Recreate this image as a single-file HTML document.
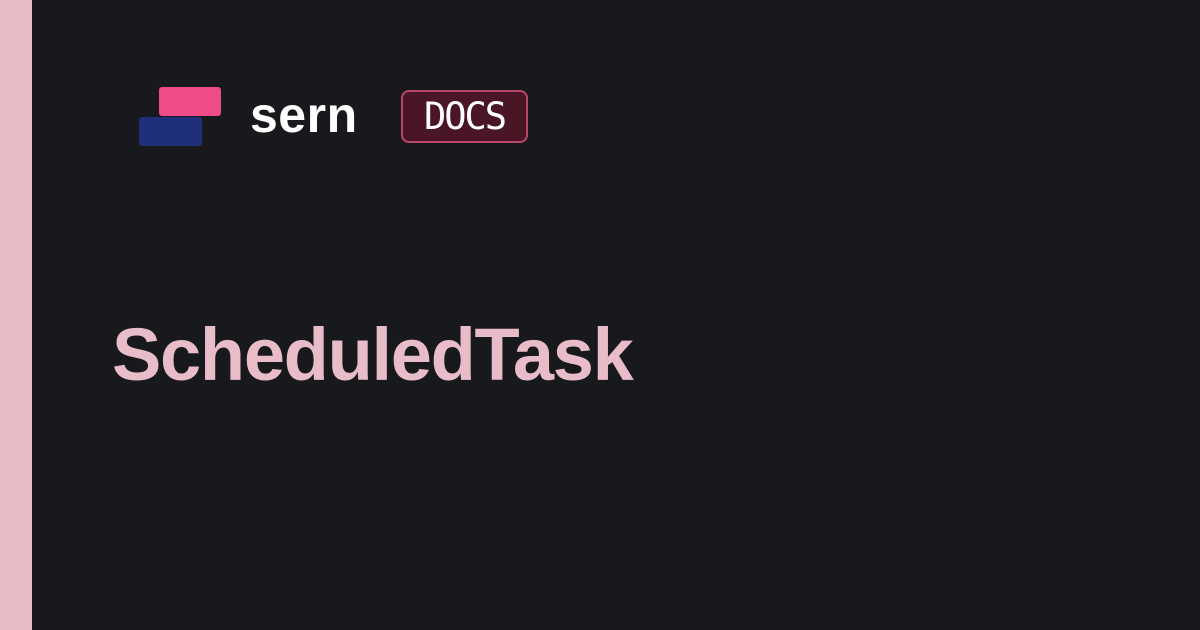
<!DOCTYPE html>
<html><head><style>
html,body{margin:0;width:1200px;height:630px;background:#18191d;overflow:hidden;font-family:"Liberation Sans",sans-serif}
.bar{position:absolute;left:0;top:0;width:32px;height:630px;background:#e8bcc6}
.r{position:absolute;border-radius:3px}
.sern{position:absolute;left:250px;top:86px;font-size:50px;font-weight:bold;color:#fff;letter-spacing:0.5px}
.docs{position:absolute;left:401px;top:90px;width:123px;height:49px;border:2px solid #b8486a;border-radius:8px;background:#4a1626;color:#fff;font-family:"DejaVu Sans Mono",monospace;font-size:37px;line-height:50px;text-align:center;letter-spacing:-2px}
.t{position:absolute;left:112px;top:312px;font-size:74px;font-weight:bold;color:#e8bcc8;letter-spacing:-1.3px}
</style></head><body>
<div class="bar"></div>
<div class="r" style="left:159px;top:87px;width:62px;height:29px;background:#ee4b88"></div>
<div class="r" style="left:139px;top:117px;width:63px;height:29px;background:#1f2f7a"></div>
<div class="sern">sern</div>
<div class="docs">DOCS</div>
<div class="t">ScheduledTask</div>
</body></html>
